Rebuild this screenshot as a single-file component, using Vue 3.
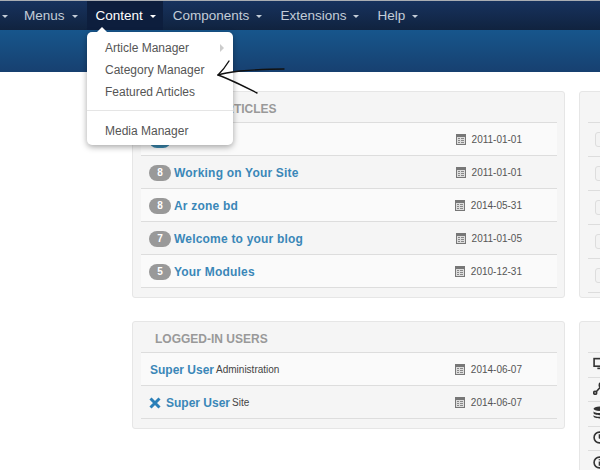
<script setup>
const navItems = [
  { label: '', active: false },
  { label: 'Menus', active: false },
  { label: 'Content', active: true },
  { label: 'Components', active: false },
  { label: 'Extensions', active: false },
  { label: 'Help', active: false }
]
const menuGroups = [
  [
    { label: 'Article Manager', sub: true },
    { label: 'Category Manager', sub: false },
    { label: 'Featured Articles', sub: false }
  ],
  [{ label: 'Media Manager', sub: false }]
]
const articles = [
  { count: '', title: '', date: '2011-01-01', blue: true },
  { count: '8', title: 'Working on Your Site', date: '2011-01-01', blue: false },
  { count: '8', title: 'Ar zone bd', date: '2014-05-31', blue: false },
  { count: '7', title: 'Welcome to your blog', date: '2011-01-05', blue: false },
  { count: '5', title: 'Your Modules', date: '2010-12-31', blue: false }
]
const users = [
  { name: 'Super User', where: 'Administration', date: '2014-06-07', x: false },
  { name: 'Super User', where: 'Site', date: '2014-06-07', x: true }
]
const quick = [1, 2, 3, 4, 5]
const sysIcons = ['monitor', 'network', 'db', 'clock', 'info']
</script>

<template>
  <div class="page">
    <header class="navbar">
      <nav class="nav">
        <div v-for="item in navItems" :key="item.label" class="nav-item" :class="{ active: item.active, stub: !item.label }">
          <span v-if="item.label">{{ item.label }}</span>
          <i class="caret"></i>
        </div>
      </nav>
    </header>
    <div class="subhead"></div>

    <main class="main">
      <section class="well">
        <h3 class="well-title">POPULAR ARTICLES</h3>
        <div v-for="(a, i) in articles" :key="i" class="row" :class="{ lighter: i % 2 === 0 }">
          <span class="badge" :class="{ blue: a.blue }">{{ a.count }}</span>
          <a class="link spaced">{{ a.title }}</a>
          <span class="date">
            <svg class="cal" viewBox="0 0 10 11" width="10" height="11">
              <path d="M0 0h10v11H0z" fill="#777" />
              <path d="M1 3h8v7H1z" fill="#ddd" />
              <path d="M2 4h2v1H2zM5 4h3v1H5zM2 6h2v1H2zM5 6h3v1H5zM2 8h2v1H2zM5 8h3v1H5z" fill="#888" />
            </svg>
            {{ a.date }}
          </span>
        </div>
      </section>

      <section class="well side">
        <div class="well-title"></div>
        <div v-for="q in quick" :key="q" class="row tall">
          <span class="check"></span>
        </div>
      </section>

      <section class="well">
        <h3 class="well-title">LOGGED-IN USERS</h3>
        <div v-for="(u, i) in users" :key="i" class="row user" :class="{ lighter: i === 0 }">
          <svg v-if="u.x" class="x" viewBox="0 0 12 12" width="12" height="12">
            <path d="M1.5 1.5l9 9M10.5 1.5l-9 9" stroke="#2a7fb8" stroke-width="3" />
          </svg>
          <a class="link">{{ u.name }}</a>
          <span class="where">{{ u.where }}</span>
          <span class="date">
            <svg class="cal" viewBox="0 0 10 11" width="10" height="11">
              <path d="M0 0h10v11H0z" fill="#777" />
              <path d="M1 3h8v7H1z" fill="#ddd" />
              <path d="M2 4h2v1H2zM5 4h3v1H5zM2 6h2v1H2zM5 6h3v1H5zM2 8h2v1H2zM5 8h3v1H5z" fill="#888" />
            </svg>
            {{ u.date }}
          </span>
        </div>
      </section>

      <section class="well side">
        <div class="well-title"></div>
        <div v-for="s in sysIcons" :key="s" class="row sys">
          <svg viewBox="0 0 12 12" width="13" height="13" fill="none" stroke="#333" stroke-width="1.5">
            <template v-if="s === 'monitor'">
              <rect x="1" y="1.5" width="10" height="7" />
              <path d="M4 10.5h5" />
            </template>
            <template v-else-if="s === 'network'">
              <circle cx="8" cy="3" r="2.2" fill="#333" />
              <circle cx="2" cy="10" r="1.4" />
              <path d="M6.5 5L3 9" />
              <circle cx="10" cy="9" r="1.4" />
            </template>
            <template v-else-if="s === 'db'">
              <ellipse cx="6" cy="2.5" rx="5.5" ry="2" fill="#333" stroke="none" />
              <path d="M.5 4.5c0 2.6 11 2.6 11 0v2c0 2.6-11 2.6-11 0zM.5 8c0 2.6 11 2.6 11 0v1.5c0 2.6-11 2.6-11 0z" fill="#333" stroke="none" />
            </template>
            <template v-else-if="s === 'clock'">
              <circle cx="6" cy="6" r="5" />
              <path d="M6 3v3.2l2 1.2" />
            </template>
            <template v-else>
              <circle cx="6" cy="6" r="5" />
              <path d="M6 5v4M6 3v1" />
            </template>
          </svg>
        </div>
      </section>
    </main>

    <div class="dropdown">
      <template v-for="(group, g) in menuGroups" :key="g">
        <div v-if="g > 0" class="divider"></div>
        <div v-for="m in group" :key="m.label" class="menu-item">
          <span>{{ m.label }}</span>
          <i v-if="m.sub" class="sub-caret"></i>
        </div>
      </template>
    </div>

    <svg class="scribble" viewBox="0 0 80 40" width="80" height="40" fill="none" stroke="#111" stroke-width="1.4" stroke-linecap="round" stroke-linejoin="round">
      <path d="M12 1C9 6 5 11 1 15c12 4 27 12 39 18" />
      <path d="M1 15c6-2 14-3 22-4 13-1 26-2 44-2" />
    </svg>
  </div>
</template>

<style>
html, body { margin: 0; background: #fff; }
</style>

<style scoped>
.page {
  position: relative;
  width: 600px;
  height: 470px;
  overflow: hidden;
  background: #fff;
  font-family: "Liberation Sans", Arial, sans-serif;
  color: #555;
}
.navbar {
  height: 29px;
  border-top: 1px solid #a9adb3;
  background: linear-gradient(#17325e, #10233f);
}
.nav { display: flex; height: 100%; }
.nav-item {
  display: flex;
  align-items: center;
  gap: 7px;
  padding: 0 8px 0 10px;
  color: #c3cdd8;
  font-size: 13.5px;
}
.nav-item.stub { padding: 0 6px 0 2px; }
.nav-item.active { color: #fff; background: #0d1e3d; margin-left: 1px; padding: 0 7px 0 9px; }
.caret {
  width: 0;
  height: 0;
  margin-top: 1px;
  border-left: 3.5px solid transparent;
  border-right: 3.5px solid transparent;
  border-top: 3.5px solid currentColor;
}
.subhead {
  height: 42px;
  background: linear-gradient(#17568c, #174070);
}
.main {
  display: grid;
  grid-template-columns: 433px 220px;
  column-gap: 14px;
  row-gap: 23px;
  align-items: start;
  padding: 19px 0 0 132px;
}
.well {
  box-sizing: border-box;
  padding: 0 7px 9px 8px;
  background: #f5f5f5;
  border: 1px solid #e6e6e6;
  border-radius: 3px;
}
.well.side { padding-bottom: 4px; }
.well-title {
  box-sizing: border-box;
  height: 31px;
  margin: 0;
  padding: 10px 0 0 14px;
  font-size: 12px;
  line-height: 14px;
  font-weight: bold;
  color: #999;
  border-bottom: 1px solid #ddd;
}
.row {
  box-sizing: border-box;
  display: flex;
  align-items: center;
  height: 33px;
  padding: 1px 35px 0 8px;
  border-bottom: 1px solid #ddd;
}
.row.lighter { background: #fafafa; }
.row.tall { height: 34px; padding: 0 0 0 7px; }
.row.sys { height: 24.6px; padding: 0 0 2px 5px; }
.badge {
  box-sizing: border-box;
  width: 22px;
  height: 16px;
  margin-right: 4px;
  border-radius: 8px;
  background: #999;
  color: #fff;
  font-size: 10px;
  font-weight: bold;
  line-height: 16px;
  text-align: center;
}
.badge.blue { background: #3a87ad; }
.link {
  color: #3a87b8;
  font-size: 12px;
  font-weight: bold;
}
.link.spaced { letter-spacing: 0.2px; margin-left: -1px; }
.user .link { margin-left: 1px; }
.x { margin-right: 4px; }
.where {
  margin-left: 2px;
  font-size: 10px;
  color: #444;
}
.date {
  display: flex;
  align-items: center;
  gap: 6px;
  margin-left: auto;
  font-size: 10px;
  color: #555;
}
.check {
  box-sizing: border-box;
  width: 60px;
  height: 15px;
  background: #f3f3f3;
  border: 1px solid #ddd;
  border-radius: 3px;
}
.dropdown {
  position: absolute;
  left: 87px;
  top: 32px;
  box-sizing: border-box;
  width: 146px;
  padding: 5px 0 3px;
  background: #fff;
  border-radius: 5px;
  box-shadow: 0 2px 6px rgba(0, 0, 0, 0.35);
  font-size: 12px;
  color: #555;
}
.dropdown::before {
  content: "";
  position: absolute;
  left: 10px;
  top: -5px;
  border-left: 5px solid transparent;
  border-right: 5px solid transparent;
  border-bottom: 5px solid #fff;
}
.menu-item {
  display: flex;
  align-items: center;
  justify-content: space-between;
  height: 22px;
  padding: 0 9px 0 18px;
}
.sub-caret {
  width: 0;
  height: 0;
  border-top: 4px solid transparent;
  border-bottom: 4px solid transparent;
  border-left: 4px solid #ccc;
}
.divider {
  height: 1px;
  margin: 7px 0 9px;
  background: #e5e5e5;
}
.scribble {
  position: absolute;
  left: 217px;
  top: 60px;
}
</style>
